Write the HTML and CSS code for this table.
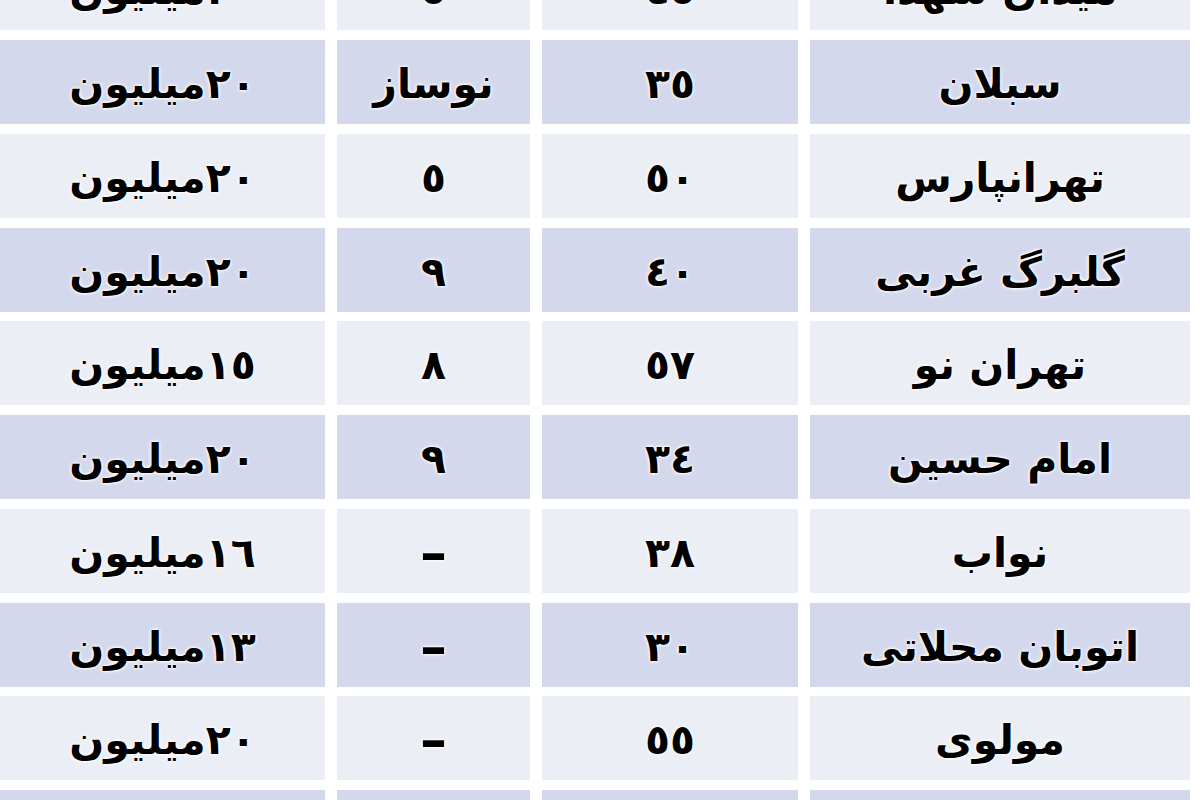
FILE: index.html
```html
<!DOCTYPE html>
<html lang="fa" dir="rtl">
<head>
<meta charset="utf-8">
<title>جدول قیمت</title>
<link rel="stylesheet" href="styles.css">
</head>
<body>
<div class="page">
  <div class="table">
    <div class="cell light">میدان شهدا</div><div class="cell light">٤٥</div><div class="cell light">٥</div><div class="cell light">٢٠میلیون</div>
    <div class="cell dark">سبلان</div><div class="cell dark">٣٥</div><div class="cell dark">نوساز</div><div class="cell dark">٢٠میلیون</div>
    <div class="cell light">تهرانپارس</div><div class="cell light">٥٠</div><div class="cell light">٥</div><div class="cell light">٢٠میلیون</div>
    <div class="cell dark">گلبرگ غربی</div><div class="cell dark">٤٠</div><div class="cell dark">٩</div><div class="cell dark">٢٠میلیون</div>
    <div class="cell light">تهران نو</div><div class="cell light">٥٧</div><div class="cell light">٨</div><div class="cell light">١٥میلیون</div>
    <div class="cell dark">امام حسین</div><div class="cell dark">٣٤</div><div class="cell dark">٩</div><div class="cell dark">٢٠میلیون</div>
    <div class="cell light">نواب</div><div class="cell light">٣٨</div><div class="cell light"><span class="dash">–</span></div><div class="cell light">١٦میلیون</div>
    <div class="cell dark">اتوبان محلاتی</div><div class="cell dark">٣٠</div><div class="cell dark"><span class="dash">–</span></div><div class="cell dark">١٣میلیون</div>
    <div class="cell light">مولوی</div><div class="cell light">٥٥</div><div class="cell light"><span class="dash">–</span></div><div class="cell light">٢٠میلیون</div>
    <div class="cell dark">پیروزی</div><div class="cell dark">٤٥</div><div class="cell dark"><span class="dash">–</span></div><div class="cell dark">٢٠میلیون</div>
  </div>
</div>
</body>
</html>
```

FILE: styles.css
```css
html, body {
  margin: 0;
  padding: 0;
  background: #ffffff;
}
.page {
  width: 1200px;
  height: 800px;
  overflow: hidden;
}
.table {
  direction: rtl;
  display: grid;
  grid-template-columns: 380px 256px 193px 325px;
  grid-auto-rows: 84px;
  column-gap: 12px;
  row-gap: 9.75px;
  margin-top: -53.75px;
  margin-right: 10px;
  width: 1190px;
}
.cell {
  display: flex;
  align-items: center;
  justify-content: center;
  padding-top: 4px;
  box-sizing: border-box;
  font-family: "DejaVu Sans", sans-serif;
  font-weight: bold;
  font-size: 41px;
  color: #000;
  text-shadow: 0 0 2px #fff, 0 0 3px #fff, 0 0 4px #fff;
}
.dash {
  font-size: 54px;
  line-height: 1;
}
.dark {
  background: #d4d8ec;
}
.light {
  background: #eceef6;
}
```
